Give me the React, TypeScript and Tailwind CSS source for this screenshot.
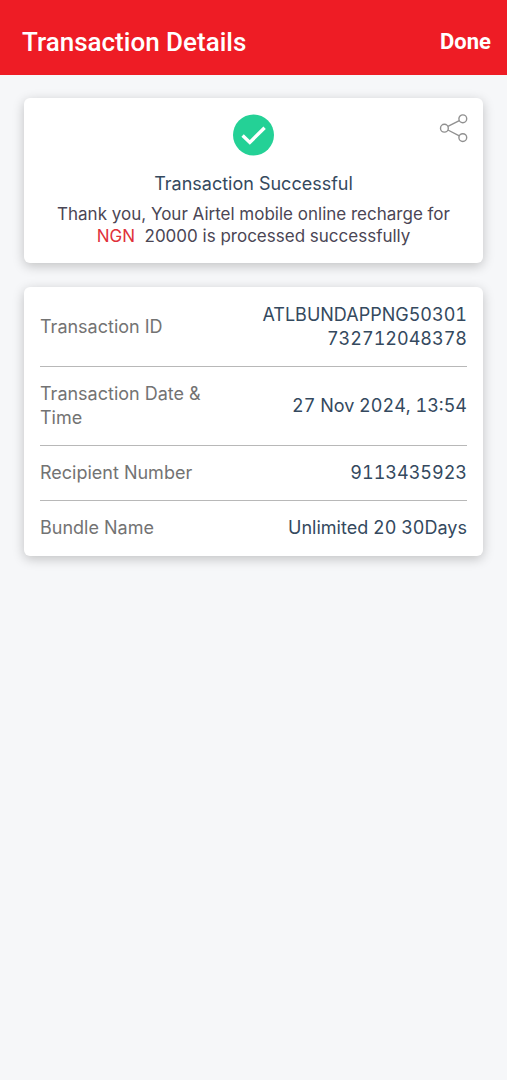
import type { ReactNode } from "react";

const details = [
  { label: "Transaction ID", value: "ATLBUNDAPPNG50301732712048378" },
  { label: "Transaction Date & Time", value: "27 Nov 2024, 13:54" },
  { label: "Recipient Number", value: "9113435923" },
  { label: "Bundle Name", value: "Unlimited 20 30Days" },
];

function Card({ children }: { children: ReactNode }) {
  return (
    <section className="relative rounded-md bg-white px-4 shadow-[0_3px_12px_rgba(0,0,0,0.22)]">
      {children}
    </section>
  );
}

function CheckIcon() {
  return (
    <svg viewBox="0 0 42 42" className="size-[42px]" aria-hidden="true">
      <circle cx="20.5" cy="21" r="20.5" fill="#24d196" />
      <path d="M9.6 21.6l7.2 6.8L31.6 13.7" fill="none" stroke="#fff" strokeWidth="3.4" />
    </svg>
  );
}

function ShareIcon() {
  return (
    <svg
      viewBox="0 0 30 30"
      className="size-[30px]"
      fill="none"
      stroke="#909090"
      strokeWidth="1.4"
      aria-hidden="true"
    >
      <circle cx="5.4" cy="14.2" r="3.9" />
      <circle cx="23.8" cy="4.8" r="3.9" />
      <circle cx="23.8" cy="23.6" r="3.9" />
      <path d="M8.9 12.4l11.4-5.8M8.9 16l11.4 5.8" />
    </svg>
  );
}

export default function App() {
  return (
    <div className="min-h-screen bg-[#f6f7f9] font-['Inter',sans-serif] text-lg leading-6 text-[#34495e]">
      {/* Header */}
      <header className="flex items-center justify-between bg-[#ee1c25] px-4 pt-6 pb-[15px] font-['Roboto',sans-serif] text-white">
        <h1 className="pl-1.5 text-[26px] leading-9 font-medium">Transaction Details</h1>
        <button type="button" className="text-[22px] leading-8 font-bold">
          Done
        </button>
      </header>

      <main className="flex flex-col gap-6 px-6 py-[23px]">
        {/* Status */}
        <Card>
          <div className="flex flex-col items-center pt-4 pb-4 text-center">
            <CheckIcon />
            <h2 className="mt-4">Transaction Successful</h2>
            <p className="mt-[7px] text-[17px] leading-[22px] text-[#4b4655]">
              Thank you, Your Airtel mobile online recharge for
              <br />
              <span className="text-[#e0303a]">NGN</span>&nbsp; 20000 is processed successfully
            </p>
          </div>
          <button type="button" aria-label="Share" className="absolute top-4 right-3.5">
            <ShareIcon />
          </button>
        </Card>

        {/* Details */}
        <Card>
          <div className="py-px">
            <table className="w-full table-fixed">
              <tbody className="divide-y divide-[#b8b8b8]">
                {details.map(({ label, value }) => (
                  <tr key={label}>
                    <th scope="row" className="py-[15px] pr-4 text-left font-normal text-[#737373]">
                      {label}
                    </th>
                    <td className="py-[15px] pl-2 text-right wrap-anywhere tabular-nums">{value}</td>
                  </tr>
                ))}
              </tbody>
            </table>
          </div>
        </Card>
      </main>
    </div>
  );
}
